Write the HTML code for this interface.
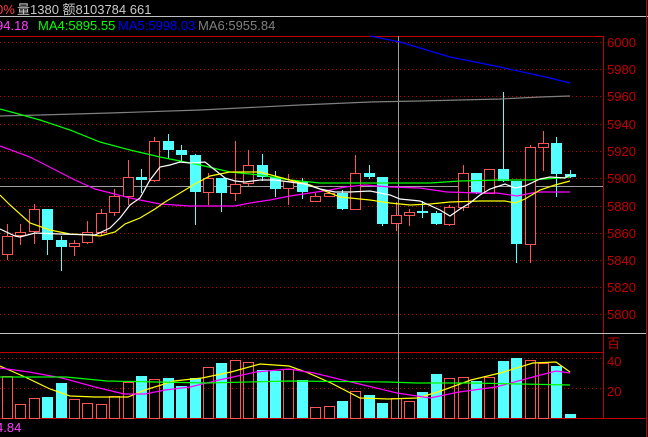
<!DOCTYPE html>
<html><head><meta charset="utf-8">
<style>
html,body{margin:0;padding:0;background:#000;width:648px;height:437px;overflow:hidden}
svg{display:block}
text{font-family:"Liberation Sans","Noto Sans CJK SC",sans-serif}
</style></head><body>
<svg id="s" width="648" height="437" xmlns="http://www.w3.org/2000/svg">
<rect width="648" height="437" fill="#000"/>
<text x="-4" y="14" font-size="13" fill="#ff4040">0%</text>
<text x="17" y="14" font-size="13" fill="#c8c8c8">量1380 额8103784 661</text>
<line x1="0" y1="16.5" x2="648" y2="16.5" stroke="#c0c0c0"/>
<text x="-4" y="30" font-size="13" fill="#ff40ff">94.18</text>
<text x="38" y="30" font-size="13" fill="#00ff00">MA4:5895.55</text>
<text x="118" y="30" font-size="13" fill="#0000ff">MA5:5998.03</text>
<text x="198" y="30" font-size="13" fill="#808080">MA6:5955.84</text>
<g id="grid" stroke="#c00000" stroke-dasharray="1,3"></g>
<line x1="0" y1="36.5" x2="603" y2="36.5" stroke="#c00000"/>
<line x1="603.5" y1="36" x2="603.5" y2="418" stroke="#c00000"/>
<line x1="646.5" y1="0" x2="646.5" y2="437" stroke="#c00000"/>
<line x1="0" y1="333.5" x2="646" y2="333.5" stroke="#c0c0c0"/>
<line x1="0" y1="352.5" x2="603" y2="352.5" stroke="#c00000"/>
<line x1="0" y1="418.5" x2="646" y2="418.5" stroke="#c00000"/>
<line x1="0" y1="186.5" x2="603" y2="186.5" stroke="#a0a0a0"/>
<line x1="398.5" y1="36" x2="398.5" y2="418" stroke="#a0a0a0"/>
<g font-size="13" fill="#c00000">
<text x="607" y="47">6000</text><text x="607" y="74">5980</text><text x="607" y="101">5960</text>
<text x="607" y="129">5940</text><text x="607" y="156">5920</text><text x="607" y="183">5900</text>
<text x="607" y="211">5880</text><text x="607" y="238">5860</text><text x="607" y="265">5840</text>
<text x="607" y="292">5820</text><text x="607" y="319">5800</text>
<text x="607" y="348">百</text><text x="607" y="366">40</text><text x="607" y="396">20</text>
</g>
<text x="-4" y="432" font-size="13" fill="#ff40ff">4.84</text>
<g id="c"></g>
<g fill="none" stroke-width="1.2">
<polyline stroke="#808080" points="0,116 40,115 110,113 200,110 300,105 370,102 420,101 500,99 540,97 570,96"/>
<polyline stroke="#0000ff" points="370,36 400,42 450,57 500,67 550,78 570,83"/>
<polyline stroke="#00ff00" points="0,109 15,113 40,120 70,130 100,142 130,150 160,157 180,161 200,165 230,172 260,175 290,180 320,183 350,183 400,183 430,183 460,181 500,180 530,180 560,178 570,177"/>
<polyline stroke="#ff00ff" points="0,146 30,157 75,180 95,189 130,198 160,204 190,206 235,206 250,203 270,200 290,196 310,193 330,190 345,187 365,185 390,187 420,188 447,192 480,193 497,193 517,196 537,192 570,192"/>
<polyline stroke="#ffff00" points="0,195 10,205 30,223 50,230 70,234 90,235 100,236 115,232 125,224 140,218 155,209 165,202 180,193 195,184 210,176 230,172 260,172 275,176 290,180 310,185 340,197 370,200 390,203 410,205 430,204 450,202 480,201 505,201 515,203 525,199 540,190 555,185 570,181"/>
<polyline stroke="#ffffff" points="0,229 15,236 20,237 35,233 60,234 95,235 110,228 120,218 130,205 140,198 150,180 160,167 170,165 180,162 190,163 205,162 215,170 225,178 235,181 245,182 260,180 275,180 290,182 305,184 320,189 335,192 350,192 370,191 390,195 400,199 420,201 440,210 450,216 460,209 470,203 480,195 490,189 505,184 515,188 525,186 540,179 550,177 565,178 570,175"/>
<polyline stroke="#ffff00" points="0,366 25,377 50,389 70,396 95,397 128,397 145,390 174,381 202,378 231,372 260,364 289,366 306,372 331,383 360,398 388,399 417,398 438,392 471,380 500,373 533,363 556,362 570,372"/>
<polyline stroke="#ff00ff" points="0,368 29,372 62,378 95,387 124,394 145,394 165,390 190,387 219,380 256,372 289,369 314,373 355,383 397,393 430,398 459,392 496,387 533,377 556,371 570,373"/>
<polyline stroke="#00ff00" points="0,377 66,377 107,381 157,382 207,383 289,381 388,382 417,383 471,383 570,385"/>
</g>
</svg>
<script>
var NS="http://www.w3.org/2000/svg",g=document.getElementById('c'),gr=document.getElementById('grid');
function el(t,a,p){var e=document.createElementNS(NS,t);for(var k in a)e.setAttribute(k,a[k]);(p||g).appendChild(e);return e;}
[42,69,96,124,151,178,206,233,260,287,314,358,388].forEach(function(y){el('line',{x1:0,y1:y+.5,x2:603,y2:y+.5},gr);});
var d=[
'r 236 254 224 259','r 232 235 224 244','r 209 231 204 243','c 209 240 209 254','c 240 247 236 270',
'r 243 246 240 255','r 232 242 221 243','r 213 232 209 235','r 196 212 189 215','r 177 196 160 204',
'c 177 180 169 192','r 141 180 137 181','c 141 150 134 158','c 150 155 145 160','c 155 192 154 224',
'r 178 192 173 204','c 178 193 178 211','r 184 193 141 200','r 165 183 150 185','c 165 177 154 180',
'c 177 189 171 196','r 181 188 174 204','c 182 192 178 198','r 196 201 193 201','r 193 196 190 196',
'c 193 209 190 209','r 173 209 155 209','c 173 177 165 178','c 177 224 177 225','r 215 223 202 230',
'r 212 215 209 225','c 211 213 201 217','c 213 224 211 224','r 207 224 205 225','r 173 207 165 210',
'c 173 193 173 193','r 169 193 169 193','c 169 181 92 181','c 181 244 181 262','r 147 244 145 262',
'r 143 147 131 170','c 143 174 137 196','c 174 177 170 177'];
var v=[376,404,398,397,383,399,403,404,396,382,376,379,378,386,378,367,363,360,362,370,371,369,380,407,406,401,391,395,403,398,401,392,374,378,377,381,377,361,358,360,363,366,414];
d.forEach(function(s,i){
 var p=s.split(' '),t=p[0],bt=+p[1],bb=+p[2],wt=+p[3],wb=+p[4];
 var x=Math.round(2+i*13.4),cx=x+5.5,col=t=='r'?'#ff5454':'#54ffff';
 el('line',{x1:cx,y1:wt,x2:cx,y2:wb+1,stroke:col});
 if(t=='r')el('rect',{x:x+.5,y:bt+.5,width:10,height:Math.max(bb-bt,2),fill:'#000',stroke:col});
 else el('rect',{x:x,y:bt,width:11,height:Math.max(bb-bt,2),fill:col});
 var vt=v[i];
 if(t=='r')el('rect',{x:x+.5,y:vt+.5,width:10,height:418-vt,fill:'none',stroke:col});
 else el('rect',{x:x,y:vt,width:11,height:418-vt,fill:col});
});
</script>
</body></html>
